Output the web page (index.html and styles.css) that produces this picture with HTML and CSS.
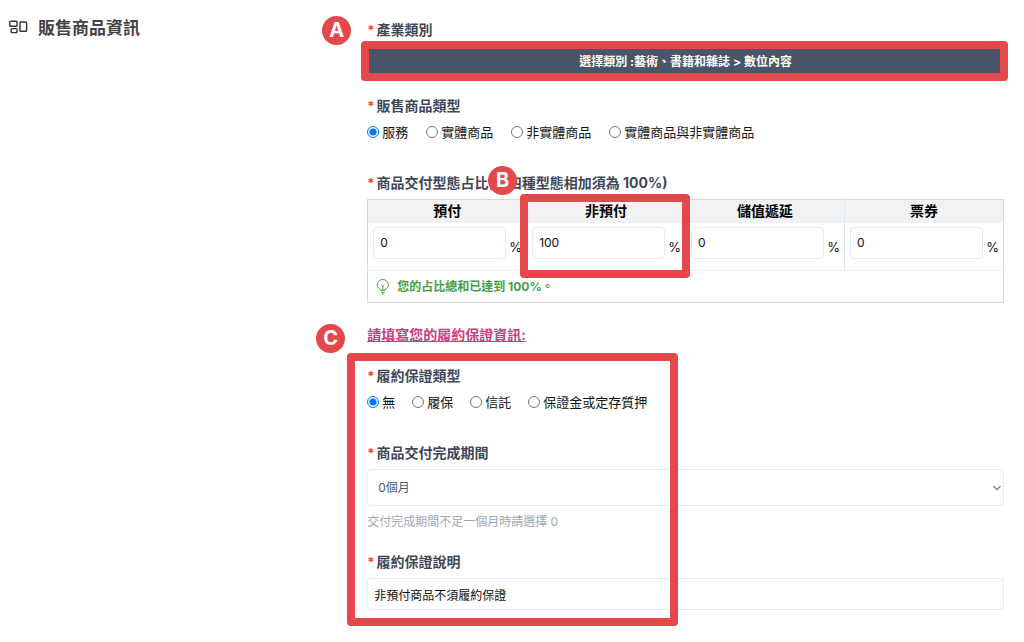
FILE: index.html
```html
<!DOCTYPE html>
<html lang="zh-Hant">
<head>
  <meta charset="utf-8">
  <meta name="viewport" content="width=device-width, initial-scale=1">
  <title>販售商品資訊</title>
  <link rel="stylesheet" href="styles.css">
</head>
<body>
  <main class="page">
    <h1 class="page-title">
      <svg class="title-icon" width="20" height="16" viewBox="0 0 20 16" fill="none" stroke="#333" stroke-width="1.4">
        <path d="M0.8 1v4.4q0 .8.8.8h5.6q.8 0 .8-.8V2q0-.8-.8-.8H1.6"/>
        <rect x="2.2" y="8.6" width="5.8" height="4" rx="0.8"/>
        <rect x="11" y="2" width="6.6" height="9.2" rx="0.8"/>
      </svg>
      販售商品資訊
    </h1>

    <form class="form">
      <div class="field">
        <div class="label required" id="category-label">產業類別</div>
        <div class="marked">
          <button type="button" class="category-btn" aria-describedby="category-label">選擇類別 :藝術、書籍和雜誌 &gt; 數位內容</button>
          <div class="highlight highlight-a"><span class="badge">A</span></div>
        </div>
      </div>

      <div class="field" role="radiogroup" aria-labelledby="type-label">
        <div class="label required" id="type-label">販售商品類型</div>
        <div class="options">
          <label><input type="radio" name="type" checked>服務</label>
          <label><input type="radio" name="type">實體商品</label>
          <label><input type="radio" name="type">非實體商品</label>
          <label><input type="radio" name="type">實體商品與非實體商品</label>
        </div>
      </div>

      <div class="field">
        <div class="label required" id="ratio-label">商品交付型態占比例(四種型態相加須為 100%)</div>
        <table class="ratio-table" aria-labelledby="ratio-label">
          <thead>
            <tr>
              <th id="prepaid">預付</th>
              <th id="non-prepaid">非預付</th>
              <th id="stored">儲值遞延</th>
              <th id="ticket">票券</th>
            </tr>
          </thead>
          <tbody>
            <tr>
              <td><div class="percent"><input type="text" value="0" aria-labelledby="prepaid"><span>%</span></div></td>
              <td class="marked">
                <div class="percent"><input type="text" value="100" aria-labelledby="non-prepaid"><span>%</span></div>
                <div class="highlight highlight-b"><span class="badge">B</span></div>
              </td>
              <td><div class="percent"><input type="text" value="0" aria-labelledby="stored"><span>%</span></div></td>
              <td><div class="percent"><input type="text" value="0" aria-labelledby="ticket"><span>%</span></div></td>
            </tr>
          </tbody>
          <tfoot>
            <tr>
              <td colspan="4">
                <div class="total">
                  <svg width="14" height="16" viewBox="0 0 14 16" fill="none" stroke="#43a047" stroke-width="1">
                    <path d="M4.7 11.5V10.4C2.6 9.6 1.2 8 1.2 5.9a5.6 5.4 0 0 1 11.2 0c0 2.1-1.4 3.7-3.5 4.5v1.1z"/>
                    <path d="M5 13.3h3.8M5.8 15h2.2M6.8 11.3V7.2M5.3 6.2l1.5 1.2 1.5-1.2"/>
                  </svg>
                  您的占比總和已達到 100%。
                </div>
              </td>
            </tr>
          </tfoot>
        </table>
      </div>

      <a class="guarantee-link" href="#guarantee">請填寫您的履約保證資訊:</a>

      <section class="guarantee marked" id="guarantee">
        <div class="field" role="radiogroup" aria-labelledby="guarantee-label">
          <div class="label required" id="guarantee-label">履約保證類型</div>
          <div class="options">
            <label><input type="radio" name="guarantee" checked>無</label>
            <label><input type="radio" name="guarantee">履保</label>
            <label><input type="radio" name="guarantee">信託</label>
            <label><input type="radio" name="guarantee">保證金或定存質押</label>
          </div>
        </div>

        <div class="field">
          <label class="label required" for="period">商品交付完成期間</label>
          <div class="select-box">
            <select id="period">
              <option>0個月</option>
              <option>1個月</option>
            </select>
            <svg class="arrow" width="8" height="6" viewBox="0 0 8 6" fill="none" stroke="#6b7280" stroke-width="1.1">
              <path d="M0.5 1l3.5 3.6L7.5 1"/>
            </svg>
          </div>
          <p class="hint">交付完成期間不足一個月時請選擇 0</p>
        </div>

        <div class="field">
          <label class="label required" for="note">履約保證說明</label>
          <input class="note" type="text" id="note" value="非預付商品不須履約保證">
        </div>

        <div class="highlight highlight-c"><span class="badge">C</span></div>
      </section>
    </form>
  </main>
</body>
</html>
```
FILE: styles.css
```css
* {
  box-sizing: border-box;
}

body {
  margin: 0;
  background-color: #fff;
  color: #111;
  font-family: Inter, "Noto Sans CJK TC", sans-serif;
  font-size: 13px;
  line-height: 20px;
}

input,
select,
button {
  font-family: inherit;
  font-size: 12px;
}

.page {
  display: grid;
  grid-template-columns: 36% 64%;
  padding: 20px 20px 20px 9px;
}

.page-title {
  display: flex;
  align-items: center;
  align-self: start;
  gap: 9px;
  margin: 0;
  font-size: 17px;
  line-height: 16px;
  color: #444;
}

/* Fields */
.field {
  margin-bottom: 20px;
}

.label {
  display: block;
  margin-bottom: 6px;
  font-size: 14px;
  font-weight: bold;
  color: #3f4757;
}

.required::before {
  content: "*";
  margin-right: 2px;
  font-size: 13px;
  color: #ef4444;
}

.category-btn {
  display: block;
  width: 100%;
  height: 30px;
  padding: 0 0 2px;
  border: none;
  background-color: #4a5568;
  color: #fff;
  font-weight: bold;
}

.options {
  display: flex;
  flex-wrap: wrap;
  gap: 18px;
  padding-bottom: 11px;
}

.guarantee .options {
  gap: 17px;
}

.options label {
  display: flex;
  align-items: center;
  gap: 3px;
}

.options input {
  width: 12px;
  height: 12px;
  margin: 0;
}

/* Ratio table */
.ratio-table {
  width: 100%;
  table-layout: fixed;
  border-collapse: collapse;
  border: 1px solid #d5d9de;
}

.ratio-table th {
  height: 23px;
  padding: 0;
  background-color: #f1f2f4;
  border-left: 1px solid #e2e8f0;
  font-size: 14px;
  color: #000;
}

.ratio-table td {
  height: 48px;
  padding: 4px 4px 4px 5px;
  border-left: 1px solid #e2e8f0;
  border-bottom: 1px solid #edf0f3;
  vertical-align: top;
}

.ratio-table th:first-child,
.ratio-table td:first-child {
  border-left-color: #d5d9de;
}

.ratio-table tfoot td {
  height: 32px;
  padding: 0 8px;
  border-bottom-color: #d5d9de;
  vertical-align: middle;
}

.percent {
  display: flex;
  align-items: flex-end;
  gap: 3px;
}

.percent input {
  flex: 1;
  min-width: 0;
}

.percent span {
  line-height: 24px;
}

.percent input,
.note {
  height: 32px;
  padding: 0 6px;
  border: 1px solid #e8eaed;
  border-radius: 4px;
  background-color: #fff;
  color: #111;
}

.total {
  display: flex;
  align-items: center;
  gap: 7px;
  font-size: 12px;
  font-weight: bold;
  color: #43a047;
}

/* Guarantee */
.guarantee-link {
  display: inline-block;
  margin-bottom: 20px;
  font-size: 14px;
  font-weight: bold;
  line-height: 23px;
  color: #cb3c7c;
}

.select-box {
  position: relative;
}

.select-box select {
  display: block;
  width: 100%;
  height: 37px;
  padding: 0 10px;
  border: 1px solid #e8eaed;
  border-radius: 4px;
  background-color: #fff;
  color: #4a5568;
  appearance: none;
}

.arrow {
  position: absolute;
  top: 16px;
  right: 3px;
  pointer-events: none;
}

.hint {
  margin: 6px 0 0;
  font-size: 12px;
  color: #a0a6b1;
}

.note {
  display: block;
  width: 100%;
}

/* Callouts */
.marked {
  position: relative;
}

.highlight {
  position: absolute;
  border: 8px solid #e5484b;
  border-radius: 4px;
  pointer-events: none;
}

.highlight-a {
  top: -5px;
  right: -4px;
  bottom: -5px;
  left: -6px;
}

.highlight-b {
  top: -29px;
  right: -5px;
  bottom: -8px;
  left: -7px;
}

.highlight-c {
  top: -13px;
  bottom: -16px;
  left: -20px;
  width: 52%;
}

.badge {
  position: absolute;
  width: 29px;
  height: 29px;
  border-radius: 50%;
  background-color: #e5484b;
  color: #fff;
  font-size: 20px;
  font-weight: bold;
  line-height: 29px;
  text-align: center;
}

.highlight-a .badge {
  top: -33px;
  left: -47px;
}

.highlight-b .badge {
  top: -36px;
  left: -40px;
}

.highlight-c .badge {
  top: -37px;
  left: -39px;
}
```
